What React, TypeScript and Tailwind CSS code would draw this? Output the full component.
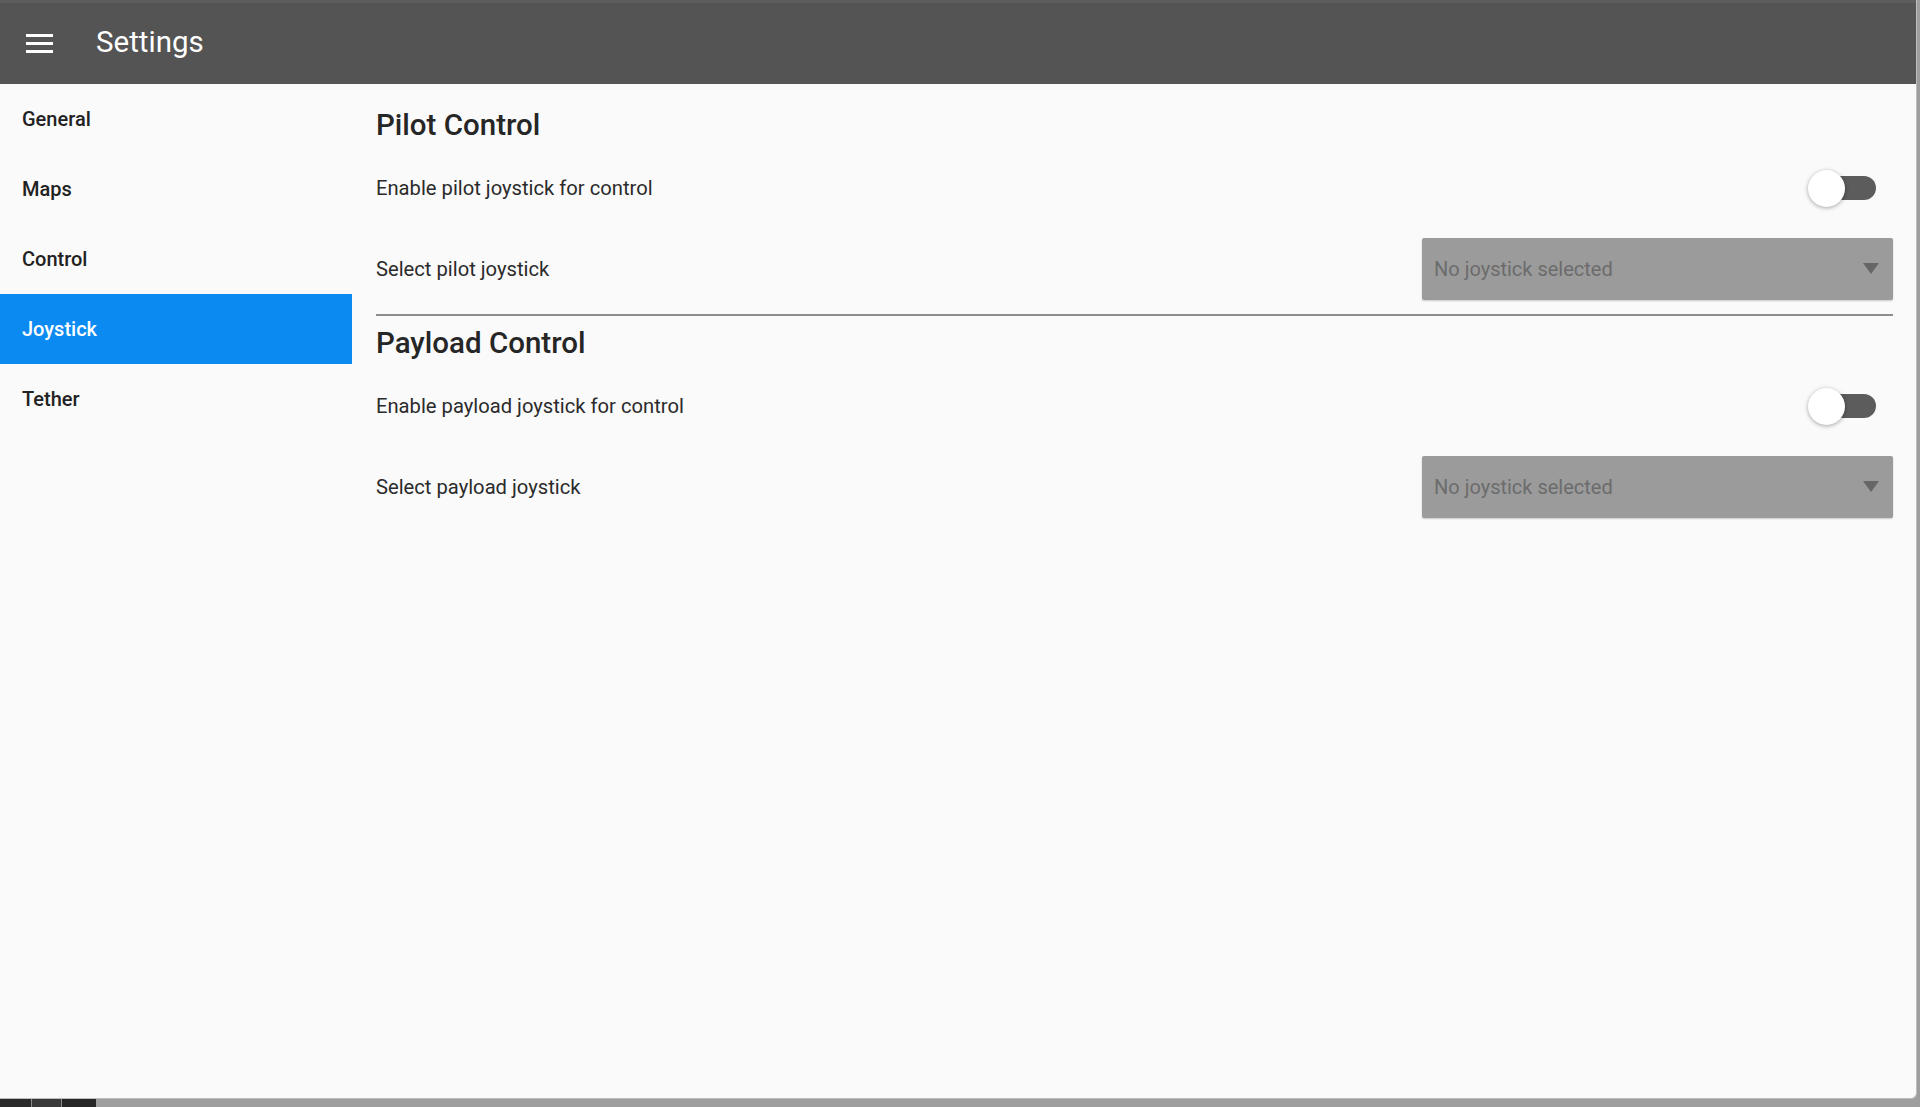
import React from "react";

function Toggle() {
  return (
    <div className="relative w-[70px] h-[38px] flex items-center">
      <div className="absolute left-[10px] w-[58px] h-[24px] rounded-full bg-[#5c5c5c]" />
      <div className="absolute left-0 w-[37px] h-[37px] rounded-full bg-white shadow-[0_1px_4px_rgba(0,0,0,0.35)]" />
    </div>
  );
}

function Dropdown() {
  return (
    <div className="w-[471px] h-[62px] bg-[#9b9b9b] rounded-[2px] flex items-center justify-between pl-[12px] pr-[14px] shadow-[0_1px_2px_rgba(0,0,0,0.2)]">
      <span className="text-[20px] text-[#6c6c6c]">No joystick selected</span>
      <svg width="16" height="12" viewBox="0 0 16 12">
        <polygon points="0,0 16,0 8,11" fill="#666666" />
      </svg>
    </div>
  );
}

export default function App() {
  const items = ["General", "Maps", "Control", "Joystick", "Tether"];
  return (
    <div
      className="w-[1920px] h-[1107px] bg-[#9e9e9e] overflow-hidden relative"
      style={{ fontFamily: "Roboto, 'Noto Sans', sans-serif" }}
    >
      <div className="w-[1917px] h-[1099px] bg-[#fafafa] flex flex-col rounded-br-[6px] overflow-hidden border-r border-b border-[#bdbdbd]">
        <header className="h-[84px] shrink-0 bg-[#545454] flex items-center border-t-[3px] border-[#5d5d5d]">
          <div className="w-[96px] pl-[26px] flex flex-col gap-[5px]">
            <div className="w-[27px] h-[3px] bg-white" />
            <div className="w-[27px] h-[3px] bg-white" />
            <div className="w-[27px] h-[3px] bg-white" />
          </div>
          <span className="text-[29.5px] text-white leading-none pb-[2px]">Settings</span>
        </header>
        <div className="flex flex-1">
          <nav className="w-[352px] shrink-0 flex flex-col">
            {items.map((it) => (
              <div
                key={it}
                className={
                  it === "Joystick"
                    ? "h-[70px] flex items-center pl-[22px] bg-[#0b8bf2] text-white text-[20px] font-medium"
                    : "h-[70px] flex items-center pl-[22px] text-[#222222] text-[20px] font-medium"
                }
              >
                {it}
              </div>
            ))}
          </nav>
          <main className="flex-1 pl-[24px] pr-[23px] text-[#2b2b2b] text-[20.2px]">
            <div className="h-[81px] flex items-center">
              <h2 className="text-[29.5px] font-medium text-[#262626] mt-[2px]">Pilot Control</h2>
            </div>
            <div className="h-[46px] flex items-center justify-between pr-[15px]">
              <span>Enable pilot joystick for control</span>
              <Toggle />
            </div>
            <div className="h-[103px] pt-[27px]">
              <div className="h-[62px] flex items-center justify-between">
                <span>Select pilot joystick</span>
                <Dropdown />
              </div>
            </div>
            <div className="h-[2px] bg-[#8c8c8c]" />
            <div className="h-[54px] flex items-center">
              <h2 className="text-[29.5px] font-medium text-[#262626]">Payload Control</h2>
            </div>
            <div className="h-[72px] flex items-center justify-between pr-[15px]">
              <span>Enable payload joystick for control</span>
              <Toggle />
            </div>
            <div className="pt-[14px]">
              <div className="h-[62px] flex items-center justify-between">
                <span>Select payload joystick</span>
                <Dropdown />
              </div>
            </div>
          </main>
        </div>
      </div>
      <div className="absolute left-0 bottom-0 h-[8px] flex">
        <div className="w-[31px] bg-[#2a2a2a]" />
        <div className="w-[1px] bg-[#8a8a8a]" />
        <div className="w-[29px] bg-[#3a3a3a]" />
        <div className="w-[1px] bg-[#8a8a8a]" />
        <div className="w-[34px] bg-[#262626]" />
      </div>
    </div>
  );
}
